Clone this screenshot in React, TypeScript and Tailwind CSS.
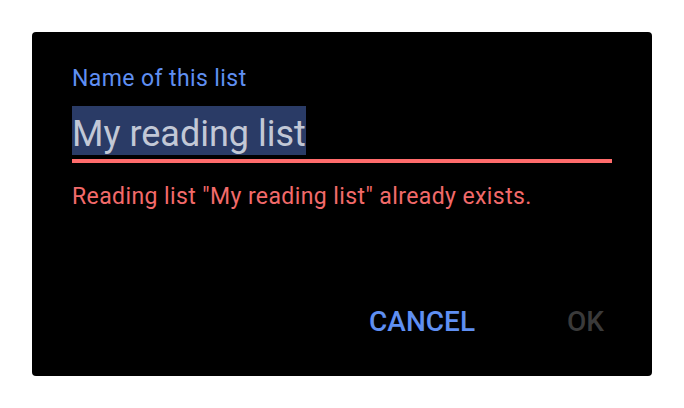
export default function App() {
  return (
    <div className="w-[684px] h-[408px] bg-white p-8" style={{ fontFamily: "Roboto, 'Liberation Sans', sans-serif" }}>
      <div className="flex h-[344px] w-[620px] flex-col rounded-[4px] bg-black px-10 pt-[34px]">
        <label className="block text-[23px] leading-[26px] tracking-[0.4px] text-[#5f8ff2]">Name of this list</label>
        <div className="mt-[14px]">
          <span className="inline-block bg-[#2a3b66] pt-[8px] text-[36px] leading-[41px] text-[#c2c8d6]">
            My reading list
          </span>
        </div>
        <div className="mt-[4px] h-[4px] bg-[#ff6b6b]" />
        <p className="mt-[21px] text-[23px] leading-[26px] tracking-[0.4px] text-[#f26a6a]">
          Reading list "My reading list" already exists.
        </p>
        <div className="mt-auto flex justify-end gap-[92px] pb-[38px] pr-[8px]">
          <button className="text-[28px] font-medium leading-[32px] text-[#5f8ff2]">CANCEL</button>
          <button className="text-[28px] font-medium leading-[32px] text-[#3a3a3a]">OK</button>
        </div>
      </div>
    </div>
  );
}
